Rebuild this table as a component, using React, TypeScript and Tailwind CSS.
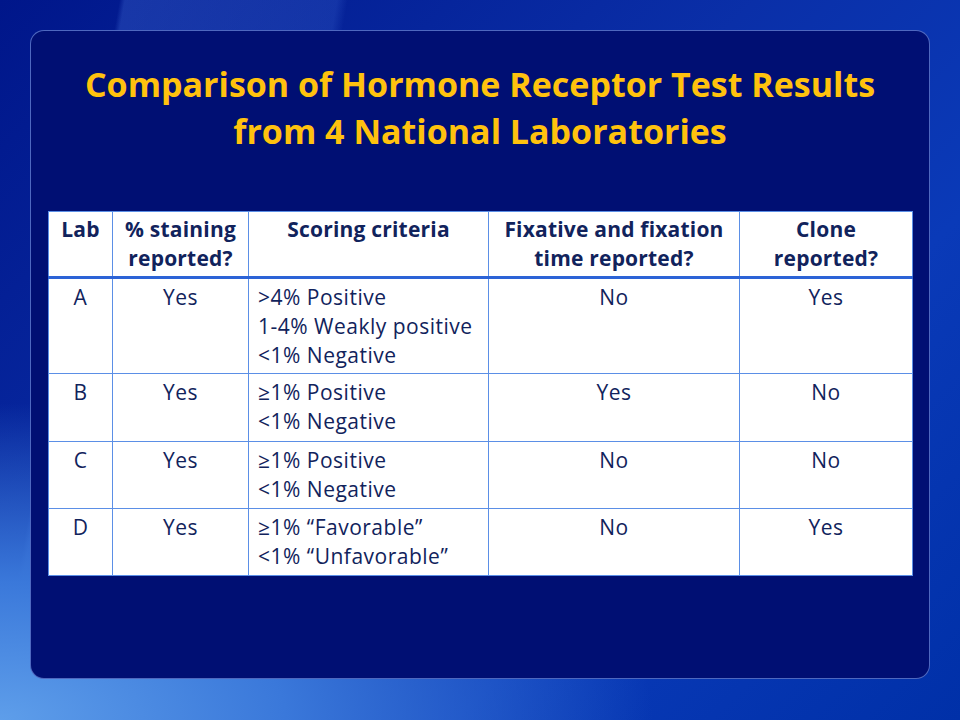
import React from "react";

const rows = [
  { lab: "A", pct: "Yes", crit: [">4% Positive", "1-4% Weakly positive", "<1% Negative"], fix: "No", clone: "Yes", h: "h-[96px]" },
  { lab: "B", pct: "Yes", crit: ["≥1% Positive", "<1% Negative"], fix: "Yes", clone: "No", h: "h-[68px]" },
  { lab: "C", pct: "Yes", crit: ["≥1% Positive", "<1% Negative"], fix: "No", clone: "No", h: "h-[67px]" },
  { lab: "D", pct: "Yes", crit: ["≥1% “Favorable”", "<1% “Unfavorable”"], fix: "No", clone: "Yes", h: "h-[67px]" },
];

export default function App() {
  return (
    <div className="w-[960px] h-[720px] overflow-hidden pt-[30px] px-[30px] pb-[41px] font-['Open_Sans',sans-serif] bg-[radial-gradient(ellipse_85%_55%_at_0%_100%,#5e9eea_0%,#3a78da_35%,rgba(20,80,200,0)_80%),linear-gradient(100deg,rgba(255,255,255,0)_11%,rgba(90,140,240,0.25)_11.5%,rgba(90,140,240,0.18)_31%,rgba(255,255,255,0)_32%),linear-gradient(135deg,#00168a_0%,#0a2fa8_45%,#0a3ab8_70%,#0030a8_100%)]">
      <div className="h-full rounded-[14px] border border-[#6f8fe0]/70 bg-[#000f73] pt-[30px] px-[17px]">
        <h1 className="flex flex-col items-center text-center text-[#ffc20e] font-bold text-[34px] leading-[47px]">
          <span className="block">Comparison of Hormone Receptor Test Results</span>
          <span className="block">from 4 National Laboratories</span>
        </h1>
        <table className="mt-[56px] w-[864px] table-fixed border-collapse bg-white text-[#11235c] text-[21px] leading-[29px]">
          <colgroup>
            <col className="w-[64px]" />
            <col className="w-[136px]" />
            <col className="w-[240px]" />
            <col className="w-[251px]" />
            <col className="w-[173px]" />
          </colgroup>
          <thead>
            <tr className="h-[66px] border-b-[3px] border-b-[#2c63d6]">
              <th className="border border-[#5b8fe6] align-top pt-[3px] px-0 font-bold tracking-[0.2px]">Lab</th>
              <th className="border border-[#5b8fe6] align-top pt-[3px] px-0 font-bold tracking-[0.2px]">% staining<br />reported?</th>
              <th className="border border-[#5b8fe6] align-top pt-[3px] px-0 font-bold tracking-[0.2px]">Scoring criteria</th>
              <th className="border border-[#5b8fe6] align-top pt-[3px] px-0 font-bold tracking-[0.2px]">Fixative and fixation<br />time reported?</th>
              <th className="border border-[#5b8fe6] align-top pt-[3px] px-0 font-bold tracking-[0.2px]">Clone<br />reported?</th>
            </tr>
          </thead>
          <tbody className="tracking-[0.5px]">
            {rows.map((r) => (
              <tr key={r.lab} className={r.h}>
                <td className="border border-[#5b8fe6] align-top pt-[4px] text-center">{r.lab}</td>
                <td className="border border-[#5b8fe6] align-top pt-[4px] text-center">{r.pct}</td>
                <td className="border border-[#5b8fe6] align-top pt-[4px] pl-[9px] text-left whitespace-nowrap">
                  {r.crit.map((c) => (
                    <div key={c}>{c}</div>
                  ))}
                </td>
                <td className="border border-[#5b8fe6] align-top pt-[4px] text-center">{r.fix}</td>
                <td className="border border-[#5b8fe6] align-top pt-[4px] text-center">{r.clone}</td>
              </tr>
            ))}
          </tbody>
        </table>
      </div>
    </div>
  );
}
